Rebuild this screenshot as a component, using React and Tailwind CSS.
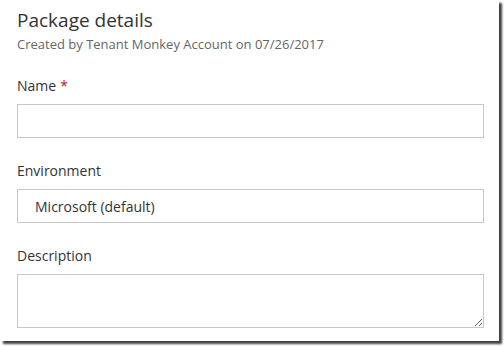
const FONT = { fontFamily: '"Open Sans", "Noto Sans", sans-serif' };

function Field({ label, required, children }) {
  return (
    <div className="flex flex-col">
      <div className="h-[20px] text-[14px] leading-[20px] text-[#333]">
        {label}
        {required && <span className="ml-[4px] text-[#c50f1f]">*</span>}
      </div>
      {children}
    </div>
  );
}

export default function App() {
  return (
    <div className="h-[346px] w-[504px] bg-white" style={FONT}>
      <div className="flex h-[341px] w-[499px] flex-col bg-white pl-[17px] pr-[15px] shadow-[3px_3px_2px_rgba(0,0,0,0.75)]">
        <h1 className="mt-[6px] h-[28px] text-[19px] font-normal leading-[28px] text-[#333]">
          Package details
        </h1>
        <p className="mt-[1px] text-[13px] leading-[18px] text-[#666]">
          Created by Tenant Monkey Account on 07/26/2017
        </p>

        <div className="mt-[23px]">
          <Field label="Name" required>
            <input
              className="mt-[8px] h-[34px] w-full border border-[#c8c8c8] px-[17px] text-[14px] text-[#333] outline-none"
              aria-label="Name"
            />
          </Field>
        </div>

        <div className="mt-[23px]">
          <Field label="Environment">
            <div className="mt-[8px] flex h-[34px] w-full items-center border border-[#c8c8c8] px-[17px] text-[14px] text-[#333]">
              Microsoft (default)
            </div>
          </Field>
        </div>

        <div className="mt-[23px]">
          <Field label="Description">
            <textarea
              className="mt-[8px] block h-[54px] w-full resize-y border border-[#c8c8c8] px-[8px] text-[14px] text-[#333] outline-none"
              aria-label="Description"
            />
          </Field>
        </div>
      </div>
    </div>
  );
}
